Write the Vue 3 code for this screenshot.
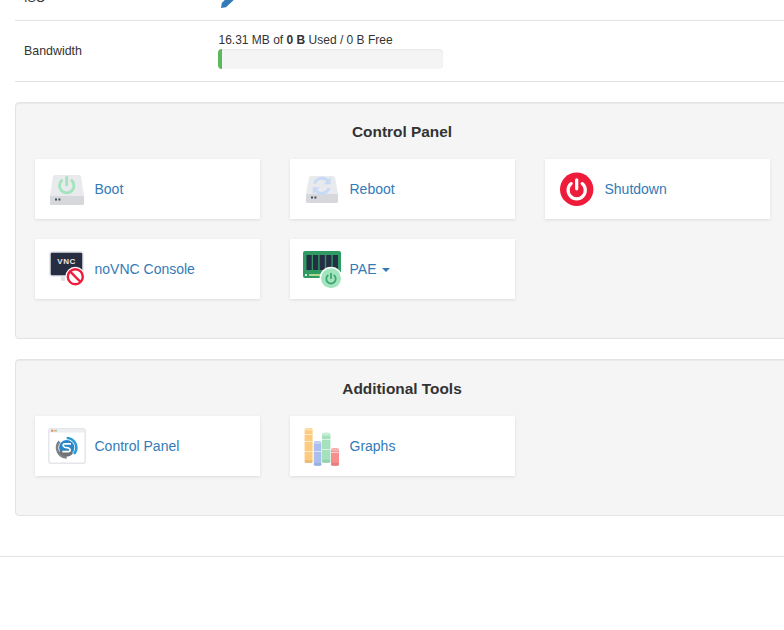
<script setup>
const controlCards = [
  { key: 'boot', label: 'Boot' },
  { key: 'reboot', label: 'Reboot' },
  { key: 'shutdown', label: 'Shutdown' },
  { key: 'vnc', label: 'noVNC Console' },
  { key: 'pae', label: 'PAE', caret: true },
]
const toolCards = [
  { key: 'cp', label: 'Control Panel' },
  { key: 'graphs', label: 'Graphs' },
]
const panels = [
  { title: 'Control Panel', cards: controlCards },
  { title: 'Additional Tools', cards: toolCards },
]
const barBands = [
  { x: 1.6, w: 8, y: 1, h: 35, fill: '#fdcb7e', top: '#fddca6', dark: '#edbb72', lines: [7, 14, 24] },
  { x: 10.8, w: 7.6, y: 14, h: 24.7, fill: '#aabfee', top: '#c3d2f3', dark: '#9ab0e0', lines: [24] },
  { x: 19, w: 8.4, y: 5.7, h: 30, fill: '#a5e1bd', top: '#c5eed5', dark: '#95d2ad', lines: [12, 22] },
  { x: 28, w: 8, y: 21.3, h: 17.4, fill: '#f68e8e', top: '#f9b0b0', dark: '#e58080', lines: [25] },
]
const chips = [3.5, 10, 16.6, 23.2, 29.8]
</script>

<template>
  <div class="page">
    <div class="info-row iso-row">
      <div class="info-label">ISO</div>
      <div class="info-value">
        <svg class="pencil" viewBox="0 0 14 14" width="14" height="14">
          <path d="M0 14 L0.8 9 L9 0.8 L13.6 5.2 L5 13.2 Z" fill="#337ab7" />
        </svg>
      </div>
    </div>
    <div class="info-row bw-row">
      <div class="info-label">Bandwidth</div>
      <div class="info-value">
        <div class="usage">16.31 MB of <b>0 B</b> Used / 0 B Free</div>
        <div class="progress"><div class="progress-fill"></div></div>
      </div>
    </div>

    <section v-for="panel in panels" :key="panel.title" class="panel">
      <h3 class="panel-title">{{ panel.title }}</h3>
      <div class="card-grid">
        <a v-for="card in panel.cards" :key="card.key" class="card">
          <svg class="icon" viewBox="0 0 38 38" width="38" height="38">
            <g v-if="card.key === 'boot'">
              <path d="M6.5 5 H31 Q32.5 5 33 6.5 L36 26 H2 L5 6.5 Q5.5 5 6.5 5 Z" fill="#e9eaed" />
              <path d="M2 26 H36 V33.5 Q36 35 34.5 35 H3.5 Q2 35 2 33.5 Z" fill="#d6d8dc" />
              <path d="M13.6 10.6 A7.2 7.2 0 1 0 23.8 10.6" fill="none" stroke="#a2e4bd" stroke-width="2.8" stroke-linecap="round" />
              <path d="M18.7 7.5 V15" stroke="#a2e4bd" stroke-width="2.8" stroke-linecap="round" />
              <rect x="7" y="28.5" width="2" height="2" fill="#444a55" />
              <rect x="10.4" y="28.5" width="2" height="2" fill="#444a55" />
            </g>
            <g v-else-if="card.key === 'reboot'">
              <path d="M8 6 H30 Q31.5 6 32 7.5 L35 24 H3 L6 7.5 Q6.5 6 8 6 Z" fill="#e9eaed" />
              <path d="M3 24 H35 V31.5 Q35 33 33.5 33 H4.5 Q3 33 3 31.5 Z" fill="#d6d8dc" />
              <path d="M11.5 13.5 A7.8 7.8 0 0 1 25.2 11.5" fill="none" stroke="#c6daf6" stroke-width="2.8" />
              <path d="M27.6 7.2 V14.2 H20.6 Z" fill="#c6daf6" />
              <path d="M26 18 A7.8 7.8 0 0 1 12.2 20" fill="none" stroke="#c6daf6" stroke-width="2.8" />
              <path d="M9.8 24.2 V17.2 H16.8 Z" fill="#c6daf6" />
              <rect x="8" y="26.5" width="2" height="2" fill="#444a55" />
              <rect x="11.4" y="26.5" width="2" height="2" fill="#444a55" />
            </g>
            <g v-else-if="card.key === 'shutdown'">
              <circle cx="18.7" cy="19.3" r="16.7" fill="#ee1c3a" />
              <path d="M13.2 13.6 A8.6 8.6 0 1 0 24.2 13.6" fill="none" stroke="#fff" stroke-width="3.2" stroke-linecap="round" />
              <path d="M18.7 9.8 V18.8" stroke="#fff" stroke-width="3.2" stroke-linecap="round" />
            </g>
            <g v-else-if="card.key === 'vnc'">
              <rect x="2" y="2" width="33" height="24" rx="2" fill="#272e42" stroke="#e2e4e8" stroke-width="1.5" />
              <text x="18.5" y="13.5" class="vnc-text" text-anchor="middle">VNC</text>
              <rect x="13" y="27" width="4" height="4" fill="#dfe1e5" />
              <circle cx="27.3" cy="26.7" r="10" fill="#fff" />
              <circle cx="27.3" cy="26.7" r="7.5" fill="#fff" stroke="#ee1c3a" stroke-width="2.4" />
              <path d="M22 21.4 L32.6 32" stroke="#ee1c3a" stroke-width="2.4" />
            </g>
            <g v-else-if="card.key === 'pae'">
              <rect x="0" y="1" width="38" height="27" rx="2" fill="#2f9a62" />
              <rect v-for="x in chips" :key="x" :x="x" y="5" width="5.2" height="15" fill="#262e45" />
              <rect x="2" y="24" width="2" height="2" fill="#d9efe2" />
              <rect x="6" y="24" width="12" height="2" fill="#b4d68c" />
              <circle cx="28" cy="28.3" r="11.5" fill="#fff" />
              <circle cx="28" cy="28.3" r="10" fill="#a2e4bd" />
              <path d="M24.8 25.4 A4.7 4.7 0 1 0 31.2 25.4" fill="none" stroke="#3fa671" stroke-width="1.8" stroke-linecap="round" />
              <path d="M28 23.6 V28.2" stroke="#3fa671" stroke-width="1.8" stroke-linecap="round" />
            </g>
            <g v-else-if="card.key === 'cp'">
              <rect x="0.8" y="1.8" width="36.4" height="34.4" rx="2" fill="#fff" stroke="#e5e6ec" stroke-width="1.5" />
              <rect x="1" y="2" width="36" height="3.5" fill="#eceef1" />
              <rect x="3" y="2.8" width="2" height="1.8" fill="#ee7b7b" />
              <rect x="5" y="2.8" width="2" height="1.8" fill="#f4c27a" />
              <rect x="7" y="2.8" width="2" height="1.8" fill="#8fd6a6" />
              <path d="M18.7 9.7 A11 11 0 0 1 27 27.8 L25 26 A8.4 8.4 0 0 0 18.7 12.2 Z" fill="#2b9ad6" />
              <path d="M18.7 31.7 A11 11 0 0 1 10.4 13.6 L12.4 15.4 A8.4 8.4 0 0 0 18.7 29.2 Z" fill="#7d8084" />
              <circle cx="18.7" cy="20.7" r="7.6" fill="#2a86c8" />
              <path d="M10.8 25 A8.6 8.6 0 0 0 25 26.5 L21.8 23.4 H14.5 Z" fill="#6f7276" />
              <path d="M23 16.8 H17 Q14.4 16.8 15.6 19.4 Q16.4 20.7 18.7 20.7 Q21 20.7 21.8 22 Q23 24.6 20.4 24.6 H14.4" fill="none" stroke="#fff" stroke-width="1.7" />
            </g>
            <g v-else-if="card.key === 'graphs'">
              <g v-for="b in barBands" :key="b.x">
                <rect :x="b.x" :y="b.y" :width="b.w" :height="b.h" rx="2.4" :fill="b.fill" />
                <rect :x="b.x" :y="b.y + b.h - 3" :width="b.w" height="3" rx="1.5" :fill="b.dark" />
                <ellipse :cx="b.x + b.w / 2" :cy="b.y + 1.5" :rx="b.w / 2" ry="1.5" :fill="b.top" />
                <rect v-for="l in b.lines" :key="l" :x="b.x" :y="l" :width="b.w" height="0.7" fill="#fff" opacity="0.85" />
              </g>
            </g>
          </svg>
          <span class="card-label">{{ card.label }}<i v-if="card.caret" class="caret"></i></span>
        </a>
      </div>
    </section>

    <hr class="rule" />
  </div>
</template>

<style scoped>
.page {
  width: 784px;
  height: 630px;
  overflow: hidden;
  background: #fff;
  font-family: "Liberation Sans", Arial, sans-serif;
  color: #333;
  font-size: 12px;
  line-height: 18px;
}
.info-row {
  display: flex;
  margin-left: 15px;
  width: 774px;
  box-sizing: border-box;
  padding-left: 9px;
  border-bottom: 1px solid #e2e2e2;
  flex-shrink: 0;
}
.iso-row {
  height: 41px;
  margin-top: -20px;
  padding-top: 9px;
}
.bw-row {
  height: 61px;
  align-items: center;
}
.info-label {
  width: 194px;
  flex-shrink: 0;
  color: #333;
  font-size: 12.4px;
}
.info-value {
  flex: 1;
  position: relative;
}
.bw-row .info-value {
  padding-bottom: 2px;
}
.pencil {
  position: absolute;
  left: 3px;
  top: 5px;
}
.usage {
  line-height: 18px;
  color: #333;
  padding-left: 0.5px;
}
.progress {
  width: 225px;
  height: 20px;
  border-radius: 4px;
  background: #f4f4f4;
  box-shadow: inset 0 1px 2px rgba(0, 0, 0, 0.06);
  overflow: hidden;
}
.progress-fill {
  width: 4px;
  height: 100%;
  background: #5cb85c;
}
.panel {
  box-sizing: border-box;
  width: 774px;
  margin: 20px 0 0 15px;
  background: #f5f5f5;
  border: 1px solid #e3e3e3;
  border-radius: 4px;
  box-shadow: inset 0 1px 1px rgba(0, 0, 0, 0.05);
  padding: 20px 19px 39px;
}
.panel-title {
  margin: 0 0 18px;
  text-align: center;
  font-size: 15.4px;
  line-height: 18px;
  font-weight: 700;
  color: #333;
}
.card-grid {
  display: grid;
  grid-template-columns: repeat(3, 225px);
  column-gap: 30px;
  row-gap: 20px;
}
.card {
  display: flex;
  align-items: center;
  height: 60px;
  padding-left: 13px;
  background: #fff;
  box-shadow: 0 1px 3px rgba(0, 0, 0, 0.1);
  color: #337ab7;
  font-size: 14px;
  line-height: 20px;
}
.icon {
  flex-shrink: 0;
  overflow: visible;
  margin-right: 8.5px;
}
.card-label {
  display: inline-block;
}
.caret {
  display: inline-block;
  width: 0;
  height: 0;
  margin-left: 6px;
  vertical-align: middle;
  border-top: 4px solid #337ab7;
  border-left: 4px solid transparent;
  border-right: 4px solid transparent;
}
.vnc-text {
  font-family: "Liberation Sans", Arial, sans-serif;
  font-size: 8px;
  font-weight: 700;
  fill: #e8eaee;
  letter-spacing: 0.5px;
}
.rule {
  margin: 40px 0 0;
  border: 0;
  border-top: 1px solid #e2e2e2;
}
</style>

<style>
html, body {
  margin: 0;
  overflow: hidden;
}
</style>
